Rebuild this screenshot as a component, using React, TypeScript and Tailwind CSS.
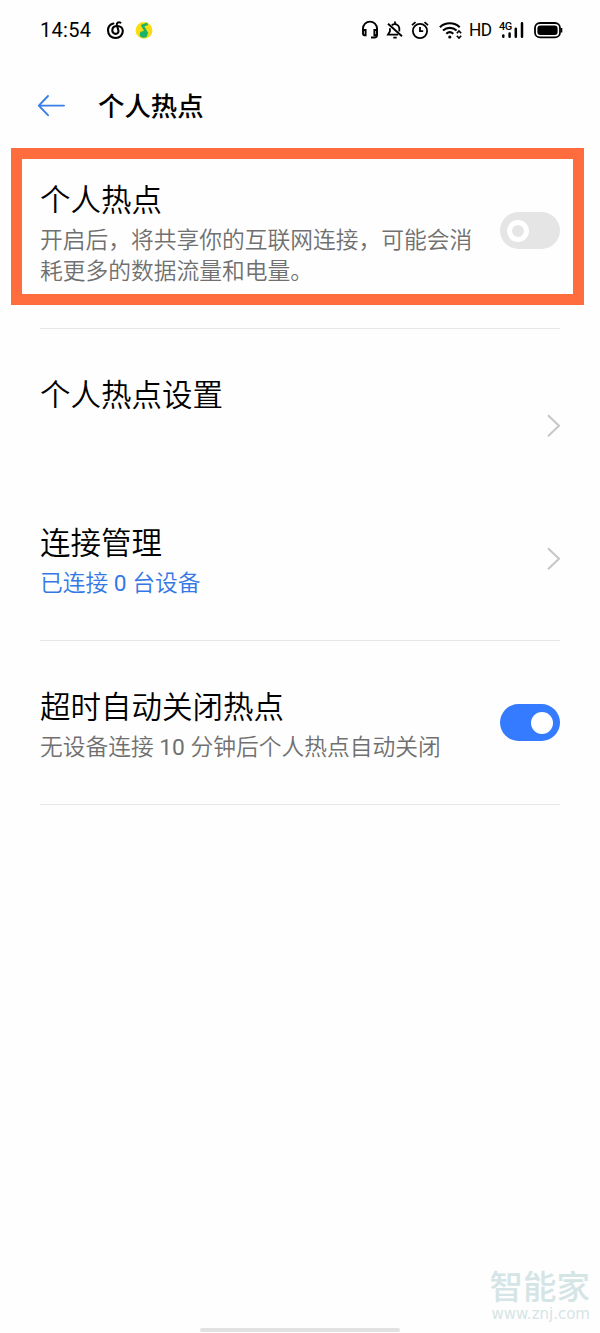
import type { ReactNode } from "react";

function StatusBar() {
  return (
    <div className="flex h-[60px] items-center justify-between pl-10 pr-[37px]">
      <div className="flex items-center">
        <span className="w-[66px] whitespace-nowrap text-[20px] leading-none tracking-[0.3px]">14:54</span>
        {/* music apps */}
        <svg width="20" height="20" viewBox="0 0 20 20" fill="none" stroke="#000" strokeWidth="2.1" strokeLinecap="round">
          <path d="M7.4 3.6C4.2 4.4 2 7.2 2 10.6 2 14.9 5.3 18 9.6 18s7.2-3.1 7.2-7c0-3.1-2.4-5-5.4-5-3.2 0-5.1 1.9-5.1 4.4 0 2 1.4 3.5 3.3 3.5 2.1 0 3.2-1.7 2.8-3.5L10.9 5C10.4 2.7 12.5 1.7 14.4 2.6" />
        </svg>
        <svg className="ml-2" width="20" height="20" viewBox="0 0 20 20">
          <circle cx="10" cy="10.4" r="8.4" fill="#fbdc12" />
          <ellipse cx="9.6" cy="14.4" rx="3.8" ry="3.3" fill="#19b36b" />
          <path d="M13.2 14 8.6 5.6 13.6 3.8" fill="none" stroke="#19b36b" strokeWidth="2.6" />
        </svg>
      </div>

      <div className="flex items-center">
        <svg width="18" height="20" viewBox="0 0 18 20" fill="none" stroke="#000" strokeWidth="1.9">
          <path d="M2 11V8.6a7 7 0 0 1 14 0V15a2.5 2.5 0 0 1-2.5 2.5H10" />
          <path d="M2 10h2.6v5.2H3.4A1.4 1.4 0 0 1 2 13.8ZM16 10h-2.6v5.2h1.2a1.4 1.4 0 0 0 1.4-1.4Z" />
        </svg>
        <svg className="ml-[7px]" width="18" height="20" viewBox="0 0 18 20" fill="none" stroke="#000" strokeWidth="1.8">
          <path d="M5.8 5.2A4.6 4.6 0 0 1 13.3 8v3.4M3.9 8.2v3.2L2 14.6h10.2M9 1.5v2" />
          <path d="M2 3.7 16 16.2M7.3 17.6h3.4" strokeWidth="1.9" />
        </svg>
        <svg className="ml-[7px]" width="18" height="20" viewBox="0 0 18 20" fill="none" stroke="#000" strokeWidth="1.8">
          <circle cx="9" cy="11" r="7.1" />
          <path d="M9 7v4.2h3.2M1 5.1 4.5 2.1M17 5.1 13.5 2.1" />
        </svg>
        <svg className="ml-[10px]" width="25" height="20" viewBox="0 0 25 20" fill="none" stroke="#000" strokeWidth="2.1">
          <path d="M.9 7.2c5.5-5.2 14.3-5.2 19.8 0M4 10.6c4-3.7 9.6-3.7 13.6 0M7.3 13.8c2.2-2 4.8-2 7 0" />
          <circle cx="10.8" cy="17" r="1.6" fill="#000" stroke="none" />
          <path d="m17.8 13.2 2.2-2.2 2.2 2.2M17.8 15.8l2.2 2.2 2.2-2.2" strokeWidth="1.6" />
        </svg>
        <span className="ml-[5px] w-[22px] origin-left scale-x-[.93] whitespace-nowrap text-[18.5px] leading-none tracking-[-0.5px]">HD</span>
        <div className="relative ml-[8px] h-5 w-[25px]">
          <span className="absolute left-0 top-[1px] text-[11px] font-medium leading-none tracking-[-0.6px]">4G</span>
          <svg width="25" height="20" viewBox="0 0 25 20" stroke="#000" strokeWidth="2.5" strokeLinecap="round">
            <path d="M4.3 15.4v1.3M10.6 13.6v3.1M16.8 8.8v7.9M23 3.3v13.4" />
          </svg>
        </div>
        <svg className="ml-[10px]" width="29" height="20" viewBox="0 0 29 20" fill="none">
          <rect x="1" y="3" width="25" height="14.4" rx="5" stroke="#000" strokeWidth="1.8" />
          <rect x="3.4" y="5.4" width="20.2" height="9.6" rx="3" fill="#000" />
          <path d="M27.6 8v4.5" stroke="#000" strokeWidth="1.4" />
        </svg>
      </div>
    </div>
  );
}

function Header() {
  return (
    <div className="flex h-[88px] items-center pl-[37px] pt-px">
      <svg width="29" height="24" viewBox="0 0 29 24" fill="none" stroke="#3a7de6" strokeWidth="1.9" strokeLinecap="round" strokeLinejoin="round">
        <path d="M11 3 1.8 12.6 11 22.2M1.8 12.6H27" />
      </svg>
      <h1 className="ml-[32px] pt-[5px] text-[26.4px] font-medium leading-[36px]">个人热点</h1>
    </div>
  );
}

function Chevron() {
  return (
    <svg className="shrink-0" width="16" height="26" viewBox="0 0 16 26" fill="none" stroke="#c6c6c6" strokeWidth="2">
      <path d="m2 2.2 11 10.5L2 23.2" />
    </svg>
  );
}

function Toggle({ on = false }: { on?: boolean }) {
  return (
    <div className={`flex h-[37px] w-[60px] shrink-0 items-center rounded-full px-[7px] ${on ? "justify-end bg-[#347bff]" : "bg-[#e5e5e5]"}`}>
      <div className={`size-[22px] rounded-full ${on ? "bg-white" : "border-[5px] border-white"}`} />
    </div>
  );
}

function Title({ children }: { children: ReactNode }) {
  return <h2 className="whitespace-nowrap text-[30.5px] font-[350] leading-[40px]">{children}</h2>;
}

function Divider() {
  return <div className="mx-10 h-px bg-[#e6e6e6]" />;
}

export default function App() {
  return (
    <main className="flex h-[1333px] w-[600px] flex-col overflow-hidden bg-[#fefefe] font-['Roboto','Noto_Sans_CJK_SC',sans-serif] text-black">
      <StatusBar />
      <Header />

      <section className="ml-[11px] flex h-[157px] w-[573px] shrink-0 justify-between border-[11px] border-[#ff6d3f] pl-[18px] pr-[13px]">
        <div className="pt-[22px]">
          <Title>个人热点</Title>
          <p className="mt-[4px] w-[434px] whitespace-nowrap text-[22.75px] font-[350] leading-[31px] text-[#707070]">
            开启后，将共享你的互联网连接，可能会消
            <br />
            耗更多的数据流量和电量。
          </p>
        </div>
        <div className="pt-[53px]">
          <Toggle />
        </div>
      </section>

      <div className="h-[23px]" />
      <Divider />

      <section className="flex h-[163px] items-start justify-between pl-10 pr-[38px] pt-[47px]">
        <Title>个人热点设置</Title>
        <div className="pt-[37px]">
          <Chevron />
        </div>
      </section>

      <section className="flex h-[148px] items-start justify-between pl-10 pr-[38px] pt-[32px]">
        <div>
          <Title>连接管理</Title>
          <p className="mt-[4px] text-[22.75px] font-[350] leading-[31px] text-[#3478e5]">
            已连接 <span className="font-normal">0</span> 台设备
          </p>
        </div>
        <div className="pt-[22px]">
          <Chevron />
        </div>
      </section>
      <Divider />

      <section className="flex h-[163px] items-start justify-between px-10 pt-[47px]">
        <div>
          <Title>超时自动关闭热点</Title>
          <p className="mt-[4px] text-[22.75px] font-[350] leading-[31px] text-[#707070]">
            无设备连接 <span className="font-normal">10</span> 分钟后个人热点自动关闭
          </p>
        </div>
        <div className="pt-[16px]">
          <Toggle on />
        </div>
      </section>
      <Divider />

      <footer className="mt-auto flex flex-col">
        <div className="mr-[10px] self-end text-right text-[#d5e5e6]">
          <div className="text-[33.5px] font-medium leading-[34px]">智能家</div>
          <div className="font-['DejaVu_Sans',sans-serif] text-[15px] leading-[18px]">www.znj.com</div>
        </div>
        <div className="mb-px mt-[5px] h-[4px] w-[200px] self-center rounded-full bg-[#e2e2e2]" />
      </footer>
    </main>
  );
}
